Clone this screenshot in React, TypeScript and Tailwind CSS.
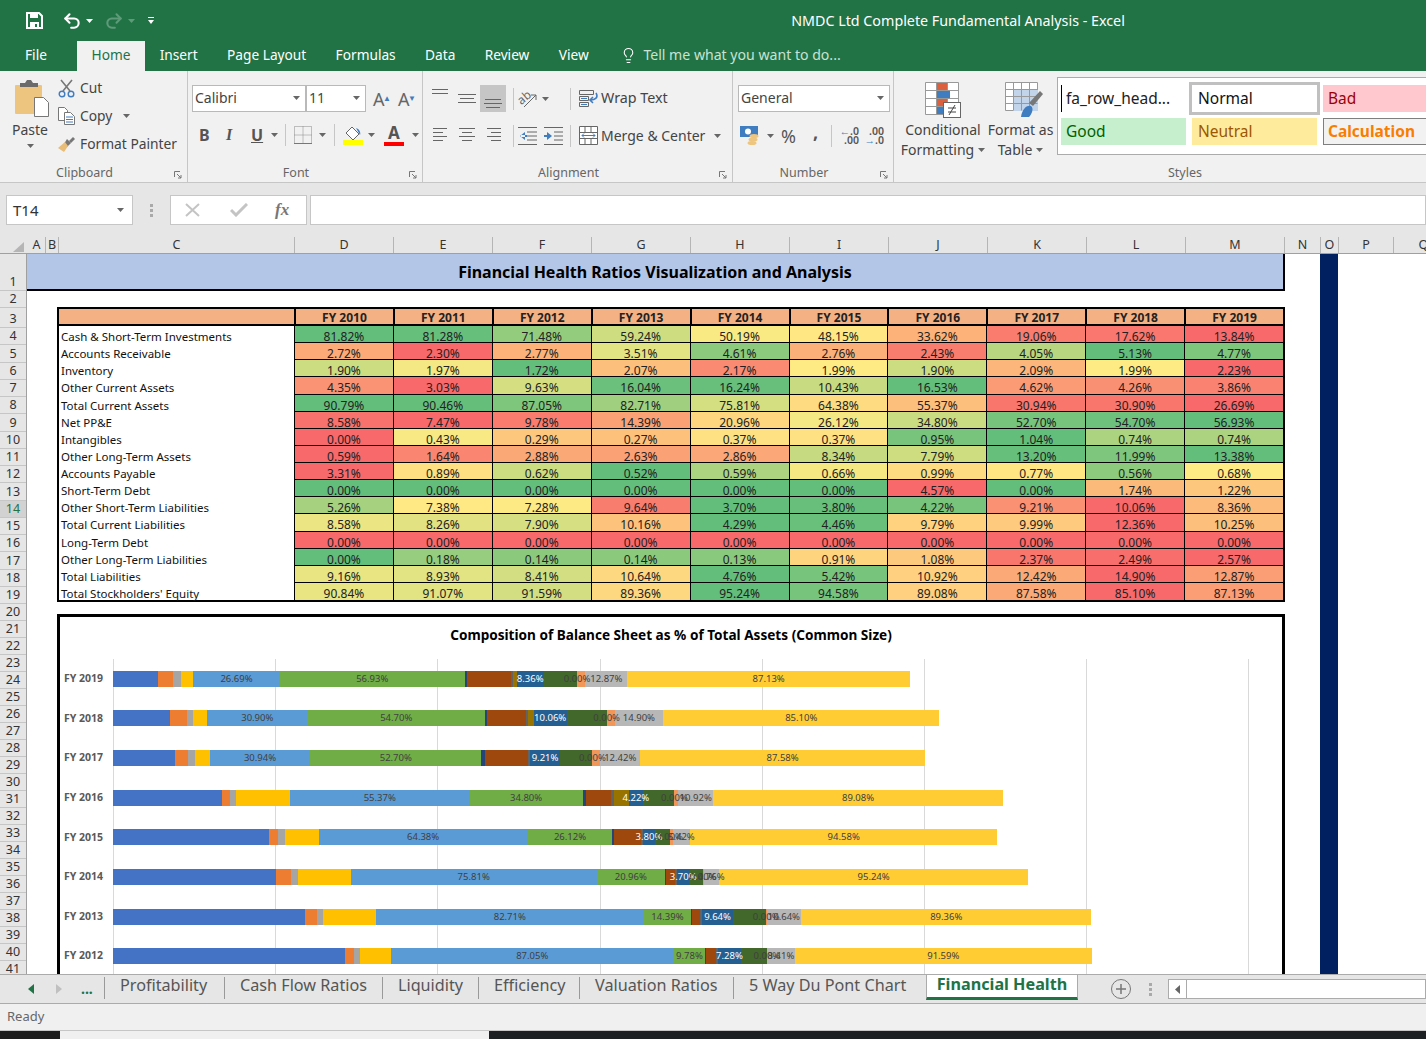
import type { ReactNode } from "react";
import { Lightbulb, Undo2, Redo2 } from "lucide-react";

const YEARS = ["FY 2010", "FY 2011", "FY 2012", "FY 2013", "FY 2014", "FY 2015", "FY 2016", "FY 2017", "FY 2018", "FY 2019"];

type Row = { label: string; values: number[]; reversed?: boolean };

const ROWS: Row[] = [
  { label: "Cash & Short-Term Investments", values: [81.82, 81.28, 71.48, 59.24, 50.19, 48.15, 33.62, 19.06, 17.62, 13.84] },
  { label: "Accounts Receivable", values: [2.72, 2.3, 2.77, 3.51, 4.61, 2.76, 2.43, 4.05, 5.13, 4.77] },
  { label: "Inventory", values: [1.9, 1.97, 1.72, 2.07, 2.17, 1.99, 1.9, 2.09, 1.99, 2.23], reversed: true },
  { label: "Other Current Assets", values: [4.35, 3.03, 9.63, 16.04, 16.24, 10.43, 16.53, 4.62, 4.26, 3.86] },
  { label: "Total Current Assets", values: [90.79, 90.46, 87.05, 82.71, 75.81, 64.38, 55.37, 30.94, 30.9, 26.69] },
  { label: "Net PP&E", values: [8.58, 7.47, 9.78, 14.39, 20.96, 26.12, 34.8, 52.7, 54.7, 56.93] },
  { label: "Intangibles", values: [0, 0.43, 0.29, 0.27, 0.37, 0.37, 0.95, 1.04, 0.74, 0.74] },
  { label: "Other Long-Term Assets", values: [0.59, 1.64, 2.88, 2.63, 2.86, 8.34, 7.79, 13.2, 11.99, 13.38] },
  { label: "Accounts Payable", values: [3.31, 0.89, 0.62, 0.52, 0.59, 0.66, 0.99, 0.77, 0.56, 0.68], reversed: true },
  { label: "Short-Term Debt", values: [0, 0, 0, 0, 0, 0, 4.57, 0, 1.74, 1.22], reversed: true },
  { label: "Other Short-Term Liabilities", values: [5.26, 7.38, 7.28, 9.64, 3.7, 3.8, 4.22, 9.21, 10.06, 8.36], reversed: true },
  { label: "Total Current Liabilities", values: [8.58, 8.26, 7.9, 10.16, 4.29, 4.46, 9.79, 9.99, 12.36, 10.25], reversed: true },
  { label: "Long-Term Debt", values: [0, 0, 0, 0, 0, 0, 0, 0, 0, 0] },
  { label: "Other Long-Term Liabilities", values: [0, 0.18, 0.14, 0.14, 0.13, 0.91, 1.08, 2.37, 2.49, 2.57], reversed: true },
  { label: "Total Liabilities", values: [9.16, 8.93, 8.41, 10.64, 4.76, 5.42, 10.92, 12.42, 14.9, 12.87], reversed: true },
  { label: "Total Stockholders' Equity", values: [90.84, 91.07, 91.59, 89.36, 95.24, 94.58, 89.08, 87.58, 85.1, 87.13] },
];

// Excel's default office chart palette, one colour per balance sheet row
const SERIES = ["#4472c4", "#ed7d31", "#a5a5a5", "#ffc000", "#5b9bd5", "#70ad47", "#264478", "#9e480e", "#636363", "#997300", "#255e91", "#43682b", "#698ed0", "#f1975a", "#b7b7b7", "#ffcd33"];
const LABELLED = [4, 5, 10, 12, 14, 15];
const PX_PER_PCT = 3.247;

const RED = [248, 105, 107];
const YELLOW = [255, 235, 132];
const GREEN = [99, 190, 123];

function mix(a: number[], b: number[], t: number) {
  const c = a.map((v, i) => Math.round(v + (b[i] - v) * t));
  return `rgb(${c[0]},${c[1]},${c[2]})`;
}

function heat(v: number, row: Row) {
  const s = [...row.values].sort((a, b) => a - b);
  const min = s[0];
  const max = s[s.length - 1];
  const mid = (s[4] + s[5]) / 2;
  const lo = row.reversed ? GREEN : RED;
  const hi = row.reversed ? RED : GREEN;
  if (v <= mid) return mid === min ? mix(lo, lo, 0) : mix(lo, YELLOW, (v - min) / (mid - min));
  return mix(YELLOW, hi, (v - mid) / (max - mid));
}

const COLS: [string, string][] = [
  ["A", "w-[18px]"], ["B", "w-[13px]"], ["C", "w-[236px]"], ["D", "w-[99px]"], ["E", "w-[99px]"], ["F", "w-[99px]"], ["G", "w-[99px]"],
  ["H", "w-[99px]"], ["I", "w-[99px]"], ["J", "w-[99px]"], ["K", "w-[99px]"], ["L", "w-[99px]"], ["M", "w-[99px]"], ["N", "w-[36px]"], ["O", "w-[18px]"], ["P", "w-[55px]"], ["Q", "w-[60px]"],
];

function rowHeight(n: number) {
  if (n === 1) return 37;
  if (n === 2) return 17;
  if (n === 3) return 20;
  if (n <= 19) return 17.25;
  return 17;
}

function Caret({ className = "", fill = "#666" }: { className?: string; fill?: string }) {
  return (
    <svg width="7" height="4" viewBox="0 0 7 4" className={className}>
      <path d="M0 0h7L3.5 4z" fill={fill} />
    </svg>
  );
}

function Sep() {
  return <div className="mx-[7px] h-[22px] w-px bg-[#c6c6c6]" />;
}

function Lines({ rows, y = 0 }: { rows: [number, number][]; y?: number }) {
  return (
    <svg width="20" height="16" viewBox="0 0 20 16">
      {rows.map(([x, w], i) => (
        <rect key={i} x={x} y={y + i * 4} width={w} height="1" fill="#666" />
      ))}
    </svg>
  );
}

function DialogLauncher() {
  return (
    <svg width="8" height="8" viewBox="0 0 8 8" className="absolute bottom-[3px] right-[5px]">
      <path d="M.5 6V.5H6M3 3l4 4M7 4v3H4" fill="none" stroke="#777" />
    </svg>
  );
}

function Group({ label, width, children }: { label: string; width: string; children: ReactNode }) {
  return (
    <div className={`relative flex h-full shrink-0 flex-col border-r border-[#c6c6c6] ${width}`}>
      <div className="h-[93px]">{children}</div>
      <div className="pr-[18px] text-center text-[12.5px] leading-[17px] text-[#666]">{label}</div>
      <DialogLauncher />
    </div>
  );
}

function Select({ text, width }: { text: string; width: string }) {
  return (
    <div className={`flex h-[27px] items-center justify-between border border-[#b9b9b9] bg-white pb-[2px] pl-[2px] pr-[5px] text-[14px] text-[#444] ${width}`}>
      <span>{text}</span>
      <Caret />
    </div>
  );
}

function Clipboard() {
  return (
    <div className="flex pl-[11px] pt-[8px]">
      <div className="flex w-[38px] flex-col items-center">
        <svg width="36" height="38" viewBox="0 0 36 38" className="ml-[3px]">
          <rect x="1" y="6" width="27" height="29" rx="1" fill="#edc57e" />
          <path d="M6 8V4h5l2-3h4l2 3h5v4z" fill="#6b6b6b" />
          <path d="M20.500 18.500h9l5 5v14h-14z" fill="#fff" stroke="#777" />
        </svg>
        <span className="mt-[2px] text-[14px] leading-[22px] text-[#444]">Paste</span>
        <Caret className="mt-[3px]" />
      </div>
      <div className="-mt-[5px] ml-[9px] flex flex-col text-[13.800px] leading-[28px] text-[#444]">
        <div className="flex h-[28px] items-center gap-[5px]">
          <svg width="17" height="19" viewBox="0 0 17 19">
            <path d="M3 1l9 11M14 1L5 12" stroke="#777" strokeWidth="1.6" />
            <circle cx="4" cy="15" r="2.800" fill="none" stroke="#3f7cc0" strokeWidth="1.400" />
            <circle cx="13" cy="15" r="2.800" fill="none" stroke="#3f7cc0" strokeWidth="1.400" />
          </svg>
          Cut
        </div>
        <div className="flex h-[28px] items-center gap-[5px]">
          <svg width="17" height="18" viewBox="0 0 17 18">
            <path d="M.5.500h6l3 3v10h-9z" fill="#fff" stroke="#777" />
            <path d="M6.500 5.500h6l4 4v8h-10z" fill="#fff" stroke="#777" />
            <path d="M8 10h7M8 12.500h7M8 15h7" stroke="#3f7cc0" />
          </svg>
          Copy
          <Caret className="ml-[6px]" />
        </div>
        <div className="flex h-[28px] items-center gap-[5px]">
          <svg width="17" height="16" viewBox="0 0 17 16">
            <path d="M9 3l4 4-4 4-3-3z" fill="#777" />
            <path d="M7 6l3 4-4 6-6-4z" fill="#e7bd78" />
            <path d="M11 5l4-4 2 2-4 4z" fill="#777" />
          </svg>
          Format Painter
        </div>
      </div>
    </div>
  );
}

function FontGroup() {
  return (
    <div className="pl-[4px] pt-[14px]">
      <div className="flex items-center">
        <Select text="Calibri" width="w-[114px]" />
        <Select text="11" width="w-[60px]" />
        <span className="relative ml-[7px] w-[25px] text-[18px] leading-[22px] text-[#666]">
          A<span className="absolute left-[10px] top-[-1px] text-[8px] text-[#3f7cc0]">▲</span>
        </span>
        <span className="relative w-[20px] text-[18px] leading-[22px] text-[#666]">
          A<span className="absolute left-[10px] top-[-1px] text-[8px] text-[#3f7cc0]">▼</span>
        </span>
      </div>
      <div className="mt-[10px] flex h-[26px] items-center text-[16px] text-[#555]">
        <span className="ml-[7px] w-[27px] font-bold">B</span>
        <span className="w-[25px] font-bold italic [font-family:'Liberation_Serif',serif]">I</span>
        <span className="w-[20px] font-bold underline">U</span>
        <Caret />
        <div className="ml-[7px] mr-[8px] h-[22px] w-px bg-[#c6c6c6]" />
        <svg width="18" height="18" viewBox="0 0 18 18">
          <path d="M.5.500h17v17H.5z M9 .5v17M.5 9h17" fill="none" stroke="#888" strokeDasharray="1 1" />
          <path d="M0 17.500h18" stroke="#777" />
        </svg>
        <Caret className="ml-[7px]" />
        <div className="mx-[8px] h-[22px] w-px bg-[#c6c6c6]" />
        <svg width="20" height="21" viewBox="0 0 20 21">
          <path d="M9 2l7 7-6 6-7-7z" fill="#fff" stroke="#666" />
          <path d="M13 3c3 1 5 4 4 7z" fill="#3f7cc0" />
          <rect y="15" width="20" height="5" fill="#ffff00" />
        </svg>
        <Caret className="ml-[5px]" />
        <div className="relative ml-[9px] flex h-[21px] w-[20px] flex-col items-center">
          <span className="text-[17px] font-bold leading-[16px] text-[#555]">A</span>
          <div className="mt-[1px] h-[5px] w-[20px] bg-[#ff0000]" />
        </div>
        <Caret className="ml-[8px]" />
      </div>
    </div>
  );
}

function Alignment() {
  return (
    <div className="pl-[5px] pt-[14px]">
      <div className="flex h-[27px] items-center">
        <div className="flex h-[27px] w-[26px] items-start justify-center pt-[4px]"><Lines rows={[[1, 16], [1, 16]]} /></div>
        <div className="flex h-[27px] w-[26px] items-center justify-center"><Lines rows={[[1, 18], [3, 14], [1, 18]]} y={3} /></div>
        <div className="flex h-[27px] w-[26px] items-end justify-center bg-[#c6c6c6] pb-[1px]"><Lines rows={[[2, 16], [1, 18], [3, 14]]} y={4} /></div>
        <Sep />
        <svg width="20" height="20" viewBox="0 0 20 20" className="-ml-[3px] overflow-visible">
          <text x="0" y="13" transform="rotate(-40 6 10)" fontSize="12" fontFamily="Noto Sans" fill="#666">ab</text>
          <path d="M6 18L18 6M13 6h5v5" stroke="#666" fill="none" />
        </svg>
        <Caret className="ml-[4px]" />
        <div className="ml-[21px] h-[22px] w-px bg-[#c6c6c6]" />
        <svg width="20" height="18" viewBox="0 0 20 18" className="ml-[8px]">
          <path d="M.5.500h14v4H.5zM.5 6.500h9v4h-9zM.5 12.500h9v4h-9z" fill="none" stroke="#666" />
          <path d="M2 8.500h6M2 14.500h6" stroke="#3f7cc0" />
          <path d="M17 3c3 5-2 7-5 7M14 7l-3 3 3 3" fill="none" stroke="#3f7cc0" strokeWidth="1.600" />
        </svg>
        <span className="ml-[2px] pb-[1px] text-[14.300px] text-[#444]">Wrap Text</span>
      </div>
      <div className="mt-[10px] flex h-[27px] items-center">
        <div className="flex w-[26px] justify-center"><Lines rows={[[2, 14], [2, 10], [2, 14], [2, 10]]} /></div>
        <div className="flex w-[26px] justify-center"><Lines rows={[[2, 16], [5, 10], [2, 16], [5, 10]]} /></div>
        <div className="flex w-[26px] justify-center"><Lines rows={[[4, 14], [8, 10], [4, 14], [8, 10]]} /></div>
        <Sep />
        <svg width="20" height="18" viewBox="0 0 20 18" className="-ml-[3px]">
          <path d="M0 .500h19M9 5h10M9 9h10M9 13h10M0 17.500h19" stroke="#666" />
          <path d="M7 5L2 9l5 4zM3 8h6v2H3z" fill="#3f7cc0" />
        </svg>
        <svg width="20" height="18" viewBox="0 0 20 18" className="ml-[6px]">
          <path d="M0 .500h19M10 5h9M10 9h9M10 13h9M0 17.500h19" stroke="#666" />
          <path d="M3 5l5 4-5 4zM0 8h5v2H0z" fill="#3f7cc0" />
        </svg>
        <div className="ml-[6px] h-[22px] w-px bg-[#c6c6c6]" />
        <svg width="20" height="19" viewBox="0 0 20 19" className="ml-[8px]">
          <path d="M.5.500h18v18H.5zM.5 6.500h18M.5 12.500h18M6 .5v6M12 .5v6M6 12.500v6M12 12.500v6" fill="#fff" stroke="#666" />
          <path d="M3 9.500h13M5 7.500l-2 2 2 2M14 7.500l2 2-2 2" fill="none" stroke="#3f7cc0" />
        </svg>
        <span className="ml-[2px] text-[14px] text-[#444]">Merge &amp; Center</span>
        <Caret className="ml-[9px]" />
      </div>
    </div>
  );
}

function NumberGroup() {
  return (
    <div className="pl-[5px] pt-[14px]">
      <Select text="General" width="w-[152px]" />
      <div className="mt-[10px] flex h-[27px] items-center text-[#555]">
        <svg width="20" height="20" viewBox="0 0 20 20" className="ml-[2px]">
          <rect width="18" height="11" fill="#3f7cc0" />
          <circle cx="8" cy="5.500" r="3" fill="#fff" />
          <ellipse cx="14" cy="10" rx="4.500" ry="2" fill="#edc57e" />
          <ellipse cx="13" cy="13.500" rx="4.500" ry="2" fill="#edc57e" />
          <ellipse cx="12" cy="17" rx="4.500" ry="2" fill="#edc57e" />
        </svg>
        <Caret className="ml-[7px]" />
        <span className="ml-[7px] w-[32px] text-[18px] leading-none">%</span>
        <span className="-mt-[8px] w-[18px] text-[18px] font-bold leading-none">,</span>
        <div className="h-[22px] w-px bg-[#c6c6c6]" />
        <div className="ml-[10px] flex w-[17px] flex-col items-end text-[10.500px] font-semibold leading-[9px] text-[#555]">
          <span className="whitespace-nowrap"><span className="text-[#3f7cc0]">←</span>.0</span>
          <span>.00</span>
        </div>
        <div className="ml-[8px] flex w-[17px] flex-col items-end text-[10.500px] font-semibold leading-[9px] text-[#555]">
          <span>.00</span>
          <span className="whitespace-nowrap"><span className="text-[#3f7cc0]">→</span>.0</span>
        </div>
      </div>
    </div>
  );
}

function Styles() {
  return (
    <div className="flex pt-[6px]">
      <div className="flex w-[96px] flex-col items-center pl-[2px] pt-[5px] text-[14px] leading-[20px] text-[#444]">
        <svg width="36" height="36" viewBox="0 0 36 36">
          <path d="M.5.500h33v32H.5zM.5 8.500h33M.5 16.500h33M.5 24.500h33M11.500.5v32M22.500.5v32" fill="#fff" stroke="#999" />
          <rect x="12" y="1" width="10" height="7" fill="#dc5f3e" />
          <rect x="12" y="9" width="13" height="7" fill="#3f7cc0" />
          <rect x="12" y="17" width="10" height="7" fill="#dc5f3e" />
          <rect x="12" y="25" width="7" height="7" fill="#3f7cc0" />
          <rect x="18.500" y="20.500" width="17" height="15" fill="#fff" stroke="#666" />
          <path d="M23 26h8M23 30h8M30 23l-6 10" stroke="#444" />
        </svg>
        <span className="mt-[2px] whitespace-nowrap">Conditional</span>
        <span className="flex items-center gap-[4px] whitespace-nowrap">Formatting <Caret /></span>
      </div>
      <div className="flex w-[67px] flex-col items-center pr-[6px] pt-[5px] text-[14px] leading-[20px] text-[#444]">
        <svg width="38" height="36" viewBox="0 0 38 36" className="ml-[6px]">
          <path d="M.5.500h32v28H.5z" fill="#fff" stroke="#999" />
          <rect x="8" y="8" width="25" height="21" fill="#c1d4ea" />
          <path d="M.5 7.500h32M.5 14.500h32M.5 21.500h32M8.500.5v28M16.500.5v28M24.500.5v28" fill="none" stroke="#999" />
          <path d="M16 35c1-7 5-12 10-11 3 2 1 8-2 11z" fill="#3f7cc0" />
          <path d="M24 21L35 9l3 3-10 12z" fill="#777" />
        </svg>
        <span className="mt-[2px] whitespace-nowrap">Format as</span>
        <span className="flex items-center gap-[4px] whitespace-nowrap">Table <Caret /></span>
      </div>
      <div className="grid h-[78px] flex-1 grid-cols-[125px_125px_110px] grid-rows-[27px_27px] gap-x-[6px] gap-y-[6px] border border-[#ababab] bg-white pl-[3px] pt-[7px] text-[15.500px] leading-[20px]">
        <div className="flex items-center border-l border-black pb-[2px] pl-[4px] text-[#222]">fa_row_head...</div>
        <div className="-mx-[3px] -my-[3px] flex items-center border-[3px] border-[#c0c0c0] pb-[2px] pl-[6px] text-[#111]">Normal</div>
        <div className="flex items-center bg-[#ffc7ce] pb-[2px] pl-[5px] text-[#9c0006]">Bad</div>
        <div className="flex items-center bg-[#c6efce] pb-[2px] pl-[5px] text-[#006100]">Good</div>
        <div className="flex items-center bg-[#ffeb9c] pb-[2px] pl-[6px] text-[#9c5700]">Neutral</div>
        <div className="flex items-center border border-[#7f7f7f] bg-[#f2f2f2] pb-[2px] pl-[4px] font-bold text-[#fa7d00]">Calculation</div>
      </div>
    </div>
  );
}

function Ribbon() {
  return (
    <div className="flex h-[112px] overflow-hidden border-b border-[#c6c6c6] bg-[#f1f1f1]">
      <Group label="Clipboard" width="w-[188px]"><Clipboard /></Group>
      <Group label="Font" width="w-[235px]"><FontGroup /></Group>
      <Group label="Alignment" width="w-[310px]"><Alignment /></Group>
      <Group label="Number" width="w-[161px]"><NumberGroup /></Group>
      <div className="flex h-full flex-1 flex-col">
        <div className="h-[93px]"><Styles /></div>
        <div className="pl-[42px] text-center text-[12.5px] leading-[17px] text-[#666]">Styles</div>
      </div>
    </div>
  );
}

function TopBar() {
  const tabs = ["Insert", "Page Layout", "Formulas", "Data", "Review", "View"];
  return (
    <div className="bg-[#217346] text-white">
      <div className="relative flex h-[41px] items-center pl-[26px]">
        <svg width="17" height="17" viewBox="0 0 17 17">
          <path d="M1 1h12l3 3v12H1z" fill="none" stroke="#fff" strokeWidth="2" />
          <rect x="4" y="1" width="8" height="5" fill="#fff" />
          <rect x="4" y="10" width="9" height="6" fill="#fff" />
          <rect x="9" y="12" width="2" height="3" fill="#217346" />
        </svg>
        <Undo2 size={20} strokeWidth={2.500} className="ml-[19px]" />
        <Caret className="ml-[4px]" fill="#fff" />
        <Redo2 size={20} strokeWidth={2.500} className="ml-[11px] text-[#5f9a79]" />
        <Caret className="ml-[4px]" fill="#5f9a79" />
        <svg width="6" height="7" viewBox="0 0 6 7" className="ml-[13px]">
          <path d="M0 0h6v1H0zM0 3h6L3 7z" fill="#fff" />
        </svg>
        <div className="flex-1 pl-[636px] text-center text-[14.300px]">NMDC Ltd Complete Fundamental Analysis - Excel</div>
        <div className="w-[300px]" />
      </div>
      <div className="flex h-[30px] items-end text-[13.700px]">
        <div className="flex h-[28px] w-[77px] items-center pb-[4px] pl-[25px]">File</div>
        <div className="flex h-[30px] w-[68px] items-center justify-center bg-[#f1f1f1] pb-[2px] text-[#217346]">Home</div>
        <div className="flex h-[28px] items-center pb-[4px]">
          {tabs.map((t) => (
            <span key={t} className="px-[14.700px]">{t}</span>
          ))}
        </div>
        <div className="flex h-[28px] items-center pb-[4px] pl-[17px] text-[14.100px] text-[#c9e2d3]">
          <Lightbulb size={17} strokeWidth={1.500} className="mr-[6px] text-white" />
          Tell me what you want to do...
        </div>
      </div>
    </div>
  );
}

function FormulaBar() {
  return (
    <div className="flex h-[54px] bg-[#e6e6e6] pl-[6px] pt-[12px]">
      <div className="flex h-[30px] w-[127px] items-center justify-between border border-[#c6c6c6] bg-white pl-[6px] pr-[8px] text-[15px] text-[#333]">
        T14
        <Caret />
      </div>
      <div className="flex h-[30px] w-[37px] flex-col items-center justify-center gap-[2px]">
        <div className="h-[3px] w-[3px] bg-[#a9a9a9]" />
        <div className="h-[3px] w-[3px] bg-[#a9a9a9]" />
        <div className="h-[3px] w-[3px] bg-[#a9a9a9]" />
      </div>
      <div className="flex h-[30px] w-[137px] items-center border border-[#c6c6c6] bg-white">
        <svg width="16" height="14" viewBox="0 0 16 14" className="ml-[14px]">
          <path d="M1 1l13 12M14 1L1 13" stroke="#c4c4c4" strokeWidth="2" />
        </svg>
        <svg width="18" height="14" viewBox="0 0 18 14" className="ml-[29px]">
          <path d="M1 7l5 5L17 1" fill="none" stroke="#c4c4c4" strokeWidth="3" />
        </svg>
        <span className="ml-[27px] text-[17px] font-bold italic text-[#777] [font-family:'Liberation_Serif',serif]">fx</span>
      </div>
      <div className="ml-[3px] h-[30px] flex-1 border border-[#c6c6c6] bg-white" />
    </div>
  );
}

function ColumnHeaders() {
  return (
    <div className="flex h-[17px] overflow-hidden border-b border-[#a0a0a0] bg-[#e6e6e6] text-[12.5px] leading-[16px] text-[#333]">
      <div className="relative w-[28px] shrink-0">
        <svg width="11" height="10" viewBox="0 0 11 10" className="absolute left-[13px] top-[5px]">
          <path d="M11 0v10H0z" fill="#b5b5b5" />
        </svg>
      </div>
      {COLS.map(([c, w]) => (
        <div key={c} className={`shrink-0 border-r border-[#b5b5b5] text-center ${w}`}>{c}</div>
      ))}
    </div>
  );
}

function RowHeaders() {
  const nums = Array.from({ length: 41 }, (_, i) => i + 1);
  return (
    <div className="w-[27px] shrink-0 border-r border-[#a0a0a0] bg-[#e6e6e6] text-[12.5px] text-[#333]">
      {nums.map((n) => (
        <div
          key={n}
          style={{ height: rowHeight(n) }}
          className={`flex items-end justify-center border-b border-[#c6c6c6] leading-[16px] ${n === 14 ? "bg-[#d2d2d2] text-[#217346]" : ""}`}
        >
          {n}
        </div>
      ))}
    </div>
  );
}

function RatioTable() {
  return (
    <div className="ml-[30px] mt-[16px] w-[1228px] border-2 border-black text-[12px] text-[#222]">
      <div className="grid h-[17px] grid-cols-[235px_repeat(10,1fr)] border-b-2 border-black bg-[#f4b183]">
        <div />
        {YEARS.map((y) => (
          <div key={y} className="border-l-2 border-black text-center text-[12px] font-bold leading-[17px]">{y}</div>
        ))}
      </div>
      <div className="grid auto-rows-[17.125px] grid-cols-[235px_repeat(10,1fr)]">
        {ROWS.map((row, r) => [
          <div key={row.label} className="relative z-10 whitespace-nowrap pl-[2px] pt-[3px] text-[11.5px] leading-[15px] text-[#111]">{row.label}</div>,
          ...row.values.map((v, i) => (
            <div
              key={row.label + i}
              style={{ backgroundColor: heat(v, row) }}
              className={`border-l border-black pt-[4px] text-center leading-[13px] ${r < ROWS.length - 1 ? "border-b" : ""}`}
            >
              {v.toFixed(2)}%
            </div>
          )),
        ])}
      </div>
    </div>
  );
}

function Bar({ yearIdx }: { yearIdx: number }) {
  return (
    <div className="flex h-[16px]">
      {ROWS.map((row, i) => {
        const v = row.values[yearIdx];
        return (
          <div key={row.label} className="relative shrink-0" style={{ width: v * PX_PER_PCT, backgroundColor: SERIES[i] }}>
            {LABELLED.includes(i) && (
              <span className={`absolute left-1/2 top-0 z-10 -translate-x-1/2 whitespace-nowrap text-[9.5px] leading-[16px] ${i === 10 ? "text-white" : "text-[#404040]"}`}>
                {v.toFixed(2)}%
              </span>
            )}
          </div>
        );
      })}
    </div>
  );
}

function Chart() {
  const order = [9, 8, 7, 6, 5, 4, 3, 2];
  return (
    <div className="ml-[30px] mt-[12px] w-[1228px] border-x-[3px] border-t-[3px] border-black bg-white">
      <div className="h-[42px] pt-[8px] text-center text-[13.600px] font-bold leading-[20px] text-black">
        Composition of Balance Sheet as % of Total Assets (Common Size)
      </div>
      <div className="relative">
        {/* gridlines sit behind the bars */}
        <div className="absolute inset-y-0 left-[53px] flex h-[330px]">
          {[0, 1, 2, 3, 4, 5, 6, 7].map((g) => (
            <div key={g} className="h-full w-[162.2px] border-l border-[#d9d9d9]" />
          ))}
        </div>
        <div className="relative">
          {order.map((y) => (
            <div key={y} className="flex h-[39.65px] items-center">
              <div className="w-[53px] shrink-0 pl-[4px] text-[10.5px] font-bold text-[#595959]">{YEARS[y]}</div>
              <Bar yearIdx={y} />
            </div>
          ))}
        </div>
      </div>
    </div>
  );
}

function Sheet() {
  return (
    <div className="flex h-[720px] overflow-hidden bg-white">
      <RowHeaders />
      <div className="w-[1258px] shrink-0">
        <div className="flex h-[37px] items-center justify-center border-b-2 border-r-2 border-black bg-[#b4c6e7] pt-[1px] text-[16px] font-bold text-black">
          Financial Health Ratios Visualization and Analysis
        </div>
        <RatioTable />
        <Chart />
      </div>
      <div className="w-[35px] shrink-0" />
      <div className="w-[18px] shrink-0 bg-[#002060]" />
    </div>
  );
}

function SheetTabs() {
  const tabs: [string, string][] = [
    ["Profitability", "w-[120px]"], ["Cash Flow Ratios", "w-[158px]"], ["Liquidity", "w-[96px]"],
    ["Efficiency", "w-[101px]"], ["Valuation Ratios", "w-[154px]"], ["5 Way Du Pont Chart", "w-[193px]"],
  ];
  return (
    <div className="flex h-[30px] border-y border-[#ababab] bg-[#e6e6e6] text-[16.200px] text-[#555]">
      <div className="flex w-[104px] shrink-0 items-center">
        <svg width="6" height="10" viewBox="0 0 6 10" className="ml-[28px]"><path d="M6 0v10L0 5z" fill="#217346" /></svg>
        <svg width="6" height="10" viewBox="0 0 6 10" className="ml-[22px]"><path d="M0 0v10l6-5z" fill="#c0c0c0" /></svg>
        <span className="ml-[19px] text-[14px] font-bold leading-none text-[#217346]">...</span>
      </div>
      {tabs.map(([t, w]) => (
        <div key={t} className={`mt-[2px] flex h-[22px] items-center border-l border-[#999] pb-[5px] pl-[15px] ${w}`}>{t}</div>
      ))}
      <div className="-mt-px flex h-[26px] w-[152px] shrink-0 items-center justify-center border-x border-t border-b-[3px] border-x-[#ababab] border-t-[#ababab] border-b-[#217346] bg-white pb-[3px] font-bold text-[#217346]">
        Financial Health
      </div>
      <div className="ml-[33px] flex h-[20px] w-[20px] items-center justify-center self-center rounded-full border-[1.500px] border-[#777] text-[#777]">
        <svg width="10" height="10" viewBox="0 0 10 10"><path d="M5 0v10M0 5h10" stroke="#777" strokeWidth="1.500" /></svg>
      </div>
      <div className="ml-[11px] flex w-[17px] flex-col items-center justify-center gap-[2px]">
        <div className="h-[3px] w-[3px] bg-[#a9a9a9]" />
        <div className="h-[3px] w-[3px] bg-[#a9a9a9]" />
        <div className="h-[3px] w-[3px] bg-[#a9a9a9]" />
      </div>
      <div className="ml-[9px] mt-[4px] flex h-[20px] flex-1 border border-[#ababab] bg-white">
        <div className="flex w-[18px] items-center justify-center border-r border-[#ababab]">
          <svg width="5" height="9" viewBox="0 0 5 9"><path d="M5 0v9L0 4.500z" fill="#666" /></svg>
        </div>
      </div>
    </div>
  );
}

export default function App() {
  return (
    <div className="flex h-[1039px] w-[1426px] flex-col overflow-hidden bg-white font-['Noto_Sans',sans-serif]">
      <TopBar />
      <Ribbon />
      <FormulaBar />
      <ColumnHeaders />
      <Sheet />
      <SheetTabs />
      <div className="flex h-[26px] items-center bg-[#f0f0f0] pl-[7px] text-[13px] text-[#666]">Ready</div>
      <div className="flex h-[9px] border-t border-[#c6c6c6]">
        <div className="w-[60px] bg-[#1d1d1d]" />
        <div className="w-[429px] bg-[#f0f0f0]" />
        <div className="flex-1 bg-[#1d2022]" />
      </div>
    </div>
  );
}
